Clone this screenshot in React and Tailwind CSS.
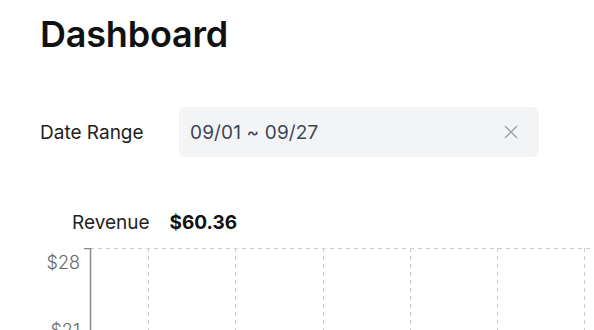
import React from 'react';

const gridX = [148, 235, 323, 410, 497, 584];

const RevenueChart = () => {
    return (
        <svg width="594" height="82" className="block" style={{ fontFamily: 'Inter, sans-serif' }}>
            <line x1="90" y1="0.5" x2="594" y2="0.5" stroke="#cccccc" strokeDasharray="4 4" />
            {gridX.map((x) => (
                <line key={x} x1={x + 0.5} y1="0" x2={x + 0.5} y2="82" stroke="#cccccc" strokeDasharray="4 4" />
            ))}
            <line x1="90.5" y1="0" x2="90.5" y2="82" stroke="#888888" strokeWidth="1.5" />
            <line x1="84" y1="0.5" x2="90" y2="0.5" stroke="#888888" strokeWidth="1.5" />
            <text x="80" y="21" textAnchor="end" fill="#666666" fontSize="18" fontWeight="300">$28</text>
            <text x="80" y="89" textAnchor="end" fill="#666666" fontSize="18" fontWeight="300">$21</text>
        </svg>
    );
};

const App = () => {
    return (
        <div className="w-[594px] h-[330px] overflow-hidden bg-white font-['Inter',sans-serif]">
            <div className="px-10 pt-[10px]">
                <h1 className="text-[36px] leading-[48px] font-semibold text-[#111111] tracking-[-0.2px]">Dashboard</h1>
                <div className="flex items-center mt-[49px]">
                    <span className="w-[139px] text-[19px] leading-[30px] pt-px text-[#222222]">Date Range</span>
                    <div className="flex items-center justify-between w-[360px] h-[50px] rounded-md bg-[#f3f4f6] pl-[11px] pr-[20px]">
                        <span className="text-[19px] leading-[30px] pt-px tracking-[0.15px] text-[#3c4556]">09/01 ~ 09/27</span>
                        <svg width="16" height="16" viewBox="0 0 16 16" fill="none" stroke="#9ca3af" strokeWidth="1.5">
                            <path d="M2 2L14 14M14 2L2 14" />
                        </svg>
                    </div>
                </div>
                <div className="flex items-center gap-5 pl-8 mt-[52px] h-[28px]">
                    <span className="text-[19px] text-[#222222]">Revenue</span>
                    <span className="text-[19px] font-bold text-[#111111]">$60.36</span>
                </div>
            </div>
            <div className="mt-[11px]">
                <RevenueChart />
            </div>
        </div>
    );
};

export default App;
